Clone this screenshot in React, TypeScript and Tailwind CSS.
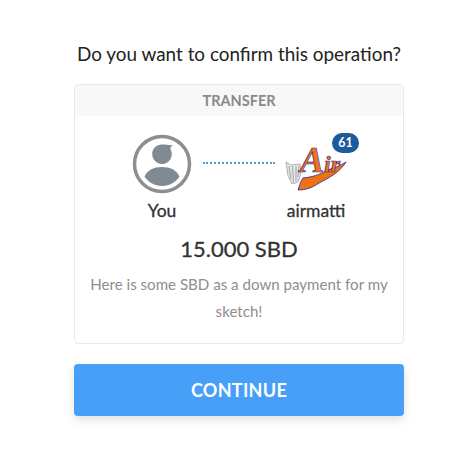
function UserIcon() {
  return (
    <svg width="60" height="60" viewBox="0 0 60 60" fill="none">
      <circle cx="30" cy="30" r="27.500" stroke="#8a8f92" strokeWidth="3.500" />
      <path d="M30 10.500c4 0 7 1 11 .6c-1.800 1.400-2.800 2.400-2.600 3.800c1 1.600 1.400 3.200 1.400 5c0 5.800-4.600 10.100-9.800 10.100s-9.800-4.300-9.800-9.900S24.500 10.500 30 10.500z" fill="#818a91" />
      <path d="M12.500 42.500C15.500 36 22 33 30 33s14.500 3 17.500 9.500c-3.500 5.500-10 9.500-17.500 9.500s-14-4-17.500-9.500z" fill="#818a91" />
    </svg>
  );
}

function AirLogo() {
  return (
    <svg width="62" height="44" viewBox="0 0 62 44" fill="none" className="overflow-visible">
      {/* bull head */}
      <path d="M1 14l5 3 9-1 1 9-3 9-6 2-4-8z" fill="#e4e5e6" stroke="#85878b" strokeWidth="0.6" />
      <path d="M4 18l2 13M7.500 18l1 16M11 18l0 15M14 18l-1 11" stroke="#7b7d82" strokeWidth="0.6" />
      {/* swoosh */}
      <path d="M13 42C15 36 16 33 18 30C27 29 35 27 42 22C49 20 55 18 61 14C55 24 44 30 34 35C27 40 20 42 13 42z" fill="#ef7314" stroke="#3b2f8f" strokeWidth="0.9" />
      <text
        x="15"
        y="24"
        fontFamily="Liberation Serif, serif"
        fontStyle="italic"
        fontWeight="700"
        fontSize="24"
        fill="#ef7314"
        stroke="#3b2f8f"
        strokeWidth="0.7"
      >
        <tspan fontSize="36">A</tspan>ir
      </text>
    </svg>
  );
}

export default function App() {
  return (
    <div className="w-[458px] h-[456px] bg-white flex flex-col items-center pl-[20px] pt-[41px] font-['Lato','Noto_Sans',sans-serif] text-[#333]">
      <h1 className="text-[18.900px] leading-[26px] text-[#222]">Do you want to confirm this operation?</h1>

      <div className="mt-[17px] w-[330px] h-[260px] rounded border border-[#e9e9e9] overflow-hidden">
        <div className="h-[31px] bg-[#f8f8f8] flex items-center justify-center text-[14.500px] font-bold text-[#8a8a8a]">
          TRANSFER
        </div>

        <div className="flex flex-col items-center pt-[18px]">
          <div className="flex items-start gap-[11px]">
            <div className="flex flex-col items-center w-[60px]">
              <UserIcon />
              <span className="mt-[5px] text-[17.500px] leading-[24px] [-webkit-text-stroke:0.3px]">You</span>
            </div>

            <div className="w-[72px] mt-[28px] border-t-2 border-dotted border-[#4f9fd6]" />

            <div className="relative flex flex-col items-center w-[60px]">
              <div className="h-[60px] flex items-end pb-[2px]">
                <AirLogo />
              </div>
              <span className="absolute -top-[1px] -right-[13px] w-[27px] h-[20px] rounded-full bg-[#1c5a9c] text-white text-[12.500px] font-bold flex items-center justify-center">
                61
              </span>
              <span className="mt-[5px] text-[17.500px] leading-[24px] [-webkit-text-stroke:0.3px]">airmatti</span>
            </div>
          </div>

          <div className="mt-[11px] text-[22px] leading-[30px] [-webkit-text-stroke:0.3px]">15.000 SBD</div>

          <p className="mt-[7px] w-[310px] text-center text-[15.100px] leading-[27px] text-[#8e8e8e]">
            Here is some SBD as a down payment for my sketch!
          </p>
        </div>
      </div>

      <button className="mt-[20px] w-[330px] h-[52px] rounded bg-[#479ff8] text-white text-[18px] font-bold tracking-[0.3px] shadow-[0_4px_10px_rgba(0,0,0,0.12)]">
        CONTINUE
      </button>
    </div>
  );
}
